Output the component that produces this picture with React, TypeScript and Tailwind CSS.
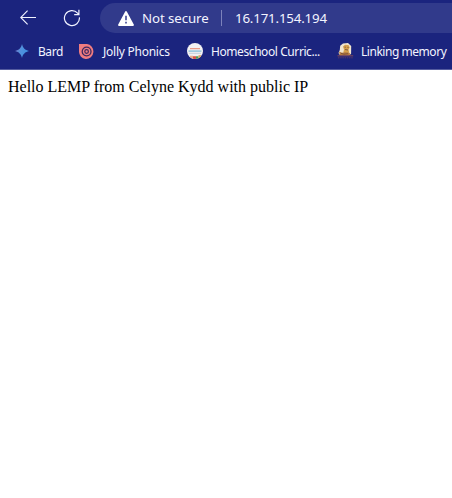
import React from 'react';

function BackIcon() {
  return (
    <svg width="16" height="16" viewBox="0 0 16 16" fill="none" stroke="#f0f2ff" strokeWidth="1.15" className="shrink-0">
      <path d="M16 7.5H.7M7.6.7.7 7.5l6.9 6.8" />
    </svg>
  );
}

function ReloadIcon() {
  return (
    <svg width="18" height="18" viewBox="0 0 18 18" fill="none" stroke="#f0f2ff" strokeWidth="1.2" className="shrink-0">
      <path d="M16.4 8.4A7.5 7.5 0 1 1 14.6 4.2L15.8 5.5M15.9.8v4.8h-4.7" />
    </svg>
  );
}

function WarningIcon() {
  return (
    <svg width="16" height="15" viewBox="0 0 16 15" className="shrink-0">
      <path d="M8 1 15 14H1Z" fill="#fff" stroke="#fff" strokeWidth="1.8" strokeLinejoin="round" />
      <path d="M8 4.8v4.5M8 10.8v1.7" stroke="#313a8c" strokeWidth="1.5" />
    </svg>
  );
}

function BardIcon() {
  return (
    <svg width="14" height="14" viewBox="0 0 14 14" className="shrink-0">
      <defs>
        <linearGradient id="spark" x1="0" y1="0" x2="1" y2=".3">
          <stop offset="0" stopColor="#7a6fc4" />
          <stop offset=".5" stopColor="#5292dd" />
          <stop offset="1" stopColor="#3f8fe0" />
        </linearGradient>
      </defs>
      <path d="M7 0C8 4 10 6 14 7 10 8 8 10 7 14 6 10 4 8 0 7 4 6 6 4 7 0Z" fill="url(#spark)" />
    </svg>
  );
}

function JollyIcon() {
  return (
    <svg width="15" height="15" viewBox="0 0 15 15" className="shrink-0">
      <path d="M0 0H8A7.2 7.5 0 1 1 0 7Z" fill="#f07c80" />
      <circle cx="7.6" cy="7.5" r="4.4" fill="none" stroke="#3c2860" strokeWidth="1.3" />
      <circle cx="7.6" cy="7.5" r="1.8" fill="none" stroke="#3c2860" strokeWidth="1.2" />
    </svg>
  );
}

function HomeschoolIcon() {
  return (
    <svg width="16" height="16" viewBox="0 0 16 16" className="shrink-0">
      <defs>
        <clipPath id="disc"><circle cx="8" cy="8" r="8" /></clipPath>
      </defs>
      <g clipPath="url(#disc)">
        <path d="M0 0h16v16H0z" fill="#f3f1f3" />
        <path d="M3 5.6h10" stroke="#eb9a86" strokeWidth="1.4" />
        <path d="M1.5 8.2h13" stroke="#9fcbdf" strokeWidth="1.8" />
        <path d="M2 10.3h12" stroke="#c7d3da" strokeWidth="1" />
        <path d="M3 12.8h3V16H3z" fill="#e9b08e" />
        <path d="M6 13.3h3V16H6z" fill="#d95345" />
        <path d="M9 13.3h2.5V16H9z" fill="#4f9b58" />
        <path d="M11.5 12.3H14V16h-2.5z" fill="#dda457" />
      </g>
    </svg>
  );
}

function LinkingIcon() {
  return (
    <svg width="17" height="16" viewBox="0 0 17 16" className="shrink-0">
      <path d="M3.2 2.8 6 .5 11 0l3.2 3-.1 7.7-2 1.5H3L1.5 10 2.8 7Z" fill="#f2e5ce" />
      <path d="m6 3.5 2-1.7 3.5.3 1.2 2.4-1.2 2.2.7 2.5-3 1.6-2.9-1.4L7 6.6Z" fill="#d5a04d" />
      <path d="m2 8.6 3 1.2 3-.6 4 .2 1.6 1.9-2 1H3Z" fill="#b47a3f" />
      <path d="M7.6 4.2h1.2M10.5 4.4h1M8 6.5l3 .5M4 10.4l3 .8 4-.5" stroke="#714838" strokeWidth=".8" fill="none" />
      <path d="M.5 12.8h15.7" stroke="#7b4659" strokeWidth="1.1" />
      <path d="M1 14.8h15" stroke="#593966" strokeWidth="1" strokeDasharray="1.5 .7" />
    </svg>
  );
}

export default function App() {
  return (
    <div className="flex h-[498px] w-full flex-col overflow-hidden bg-white">
      <header className="flex h-[70px] shrink-0 flex-col border-b border-[#555c9f] bg-[#1b247e] pt-[3px] font-['Noto_Sans','Open_Sans',sans-serif] whitespace-nowrap text-[#f3f4ff]">
        <div className="flex h-[30px] shrink-0 items-center pl-5">
          <button aria-label="Back" className="w-[43px]"><BackIcon /></button>
          <button aria-label="Reload" className="w-[37px]"><ReloadIcon /></button>
          <div className="flex h-[30px] flex-1 items-center rounded-l-full bg-[#313a8b] pl-[18px] text-[13.3px]">
            <WarningIcon />
            <span className="ml-2 w-[79px] shrink-0 pt-px tracking-[-0.1px]">Not secure</span>
            <span className="h-4 w-px shrink-0 bg-[#7c82bb]" />
            <span className="ml-[13px] pt-px tracking-[-0.18px]">16.171.154.194</span>
          </div>
        </div>
        <nav className="flex h-9 shrink-0 items-center pl-[15px] text-[12px]">
          <BardIcon />
          <span className="ml-[9px] w-[41px] shrink-0 pt-px tracking-[-0.45px]">Bard</span>
          <JollyIcon />
          <span className="ml-[9px] w-[84px] shrink-0 pt-px tracking-[-0.25px]">Jolly Phonics</span>
          <HomeschoolIcon />
          <span className="ml-2 w-[126px] shrink-0 pt-px tracking-[-0.42px]">Homeschool Curric...</span>
          <LinkingIcon />
          <span className="ml-[7px] shrink-0 pt-px tracking-[-0.46px]">Linking memory</span>
        </nav>
      </header>
      <main className="p-2 font-['Liberation_Serif','Times_New_Roman',serif] text-[16px] leading-[18px] text-black">
        Hello LEMP from Celyne Kydd with public IP
      </main>
    </div>
  );
}
